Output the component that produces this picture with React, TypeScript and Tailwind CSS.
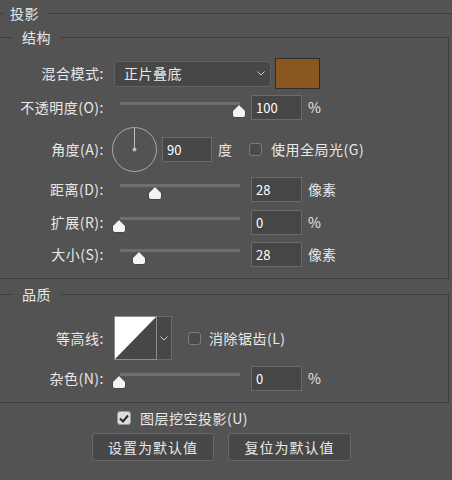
import React from 'react';

const FONT = { fontFamily: '"Noto Sans CJK SC", "Noto Sans", sans-serif' };

function Thumb({ left }: { left: number }) {
  return (
    <svg className="absolute top-[9px]" style={{ left }} width="14" height="14" viewBox="0 0 14 14">
      <path d="M7 0.5 L13.5 7 V11 Q13.5 13.5 11 13.5 H3 Q0.5 13.5 0.5 11 V7 Z" fill="#f4f4f4" stroke="#2e2e2e" strokeWidth="0.8" />
    </svg>
  );
}

function Slider({ pos }: { pos: number }) {
  // pos = thumb centre, px from track start
  return (
    <div className="relative w-[139px] h-[25px] shrink-0">
      <div className="absolute left-[8px] top-[7px] w-[120px] h-[3px] bg-[#6e6e6e]" />
      <Thumb left={pos + 1} />
    </div>
  );
}

function NumBox({ value, w = 'w-[51px]' }: { value: string; w?: string }) {
  return (
    <div className={`${w} h-[25px] shrink-0 bg-[#464646] border border-[#6a6a6a] flex items-center pl-[4px] text-[13px] text-white`}>
      {value}
    </div>
  );
}

function Label({ children }: { children: React.ReactNode }) {
  return <div className="w-[105px] shrink-0 text-right pr-px tracking-[0.5px]">{children}</div>;
}

function GroupHeader({ title }: { title: string }) {
  return (
    <div className="flex items-center h-[20px]">
      <div className="w-[12px] h-px bg-[#3e3e3e]" />
      <span className="px-[10px] leading-none tracking-[0.5px]">{title}</span>
      <div className="flex-1 self-end h-[10px] border-t border-r border-[#3e3e3e]" />
    </div>
  );
}

function SliderRow({ label, pos, value, unit, className = '' }: { label: React.ReactNode; pos: number; value: string; unit: string; className?: string }) {
  return (
    <div className={`flex items-center h-[25px] ${className}`}>
      <Label>{label}</Label>
      <div className="ml-[7px]">
        <Slider pos={pos} />
      </div>
      <NumBox value={value} />
      <span className="ml-[6px]">{unit}</span>
    </div>
  );
}

function CheckBox({ checked = false }: { checked?: boolean }) {
  if (checked) {
    return (
      <div className="w-[14px] h-[14px] shrink-0 rounded-[3px] bg-[#dcdcdc] border border-[#9a9a9a] flex items-center justify-center">
        <svg width="10" height="9" viewBox="0 0 10 9">
          <path d="M1 4.5 L4 7.5 L9 1.5" fill="none" stroke="#2a2a2a" strokeWidth="2" />
        </svg>
      </div>
    );
  }
  return <div className="w-[13px] h-[13px] shrink-0 rounded-[3px] bg-[#4a4a4a] border border-[#7c7c7c]" />;
}

function Chevron() {
  return (
    <svg width="8" height="5" viewBox="0 0 8 5">
      <path d="M0.5 0.5 L4 4 L7.5 0.5" fill="none" stroke="#cfcfcf" strokeWidth="1" />
    </svg>
  );
}

export default function App() {
  return (
    <div className="w-[452px] h-[480px] bg-[#535353] overflow-hidden text-[14px] text-[#e8e8e8]" style={FONT}>
      {/* 投影 */}
      <div className="flex items-center h-[26px]">
        <div className="w-[3px] h-px bg-[#3e3e3e]" />
        <span className="ml-[7px] mr-[8px] leading-none tracking-[0.5px]">投影</span>
        <div className="flex-1 h-px bg-[#3e3e3e]" />
      </div>

      {/* 结构 */}
      <div className="mt-px w-[449px]">
        <GroupHeader title="结构" />
        <div className="border-r border-b border-[#3e3e3e] pt-[11px] pb-[11px]">
          <div className="flex items-center h-[31px]">
            <Label>混合模式:</Label>
            <div className="ml-[9px] w-[157px] h-[26px] rounded-[3px] bg-[#474747] border border-[#626262] flex items-center pl-[9px] pr-[5px]">
              <span className="flex-1 tracking-[0.5px]">正片叠底</span>
              <Chevron />
            </div>
            <div className="ml-[4px] w-[45px] h-[31px] bg-[#8b5720] border border-[#2c2c2c]" />
          </div>

          <SliderRow className="mt-[6px]" label="不透明度(O):" pos={119} value="100" unit="%" />

          <div className="flex items-center h-[45px] mt-[7px]">
            <Label>角度(A):</Label>
            <div className="ml-[7px] w-[45px] h-[45px] shrink-0">
              <svg width="45" height="45" viewBox="0 0 45 45">
                <circle cx="22.5" cy="22.5" r="22" fill="none" stroke="#a8a8a8" strokeWidth="1" />
                <line x1="22.5" y1="1" x2="22.5" y2="22.5" stroke="#bdbdbd" strokeWidth="1" />
                <circle cx="22.5" cy="22.5" r="2" fill="#bdbdbd" />
              </svg>
            </div>
            <div className="ml-[5px]">
              <NumBox value="90" w="w-[50px]" />
            </div>
            <span className="ml-[6px]">度</span>
            <div className="ml-[17px]">
              <CheckBox />
            </div>
            <span className="ml-[9px] tracking-[0.5px]">使用全局光(G)</span>
          </div>

          <SliderRow className="mt-[5px]" label="距离(D):" pos={35} value="28" unit="像素" />
          <SliderRow className="mt-[8px]" label="扩展(R):" pos={-1} value="0" unit="%" />
          <SliderRow className="mt-[7px]" label="大小(S):" pos={19} value="28" unit="像素" />
        </div>
      </div>

      {/* 品质 */}
      <div className="mt-[5px] w-[449px]">
        <GroupHeader title="品质" />
        <div className="border-r border-b border-[#3e3e3e] pt-[12px] pb-[11px]">
          <div className="flex items-center h-[44px]">
            <Label>等高线:</Label>
            <div className="ml-[9px] flex h-[44px]">
              <svg width="43" height="44" viewBox="0 0 43 44">
                <rect x="0.5" y="0.5" width="42" height="43" fill="#474747" stroke="#8c8c8c" />
                <path d="M1 1 H42 L1 43 Z" fill="#ffffff" />
              </svg>
              <div className="w-[15px] h-[44px] bg-[#474747] border border-[#6a6a6a] border-l-0 flex items-center justify-center">
                <Chevron />
              </div>
            </div>
            <div className="ml-[16px]">
              <CheckBox />
            </div>
            <span className="ml-[8px] tracking-[0.5px]">消除锯齿(L)</span>
          </div>
          <SliderRow className="mt-[6px]" label="杂色(N):" pos={-1} value="0" unit="%" />
        </div>
      </div>

      {/* bottom */}
      <div className="flex items-center h-[20px] mt-[5px] pl-[117px]">
        <CheckBox checked />
        <span className="ml-[9px] tracking-[0.5px]">图层挖空投影(U)</span>
      </div>
      <div className="flex mt-[5px] pl-[92px] gap-[14px]">
        <button className="w-[122px] h-[28px] rounded-[3px] bg-[#474747] border border-[#686868] tracking-[1px]">设置为默认值</button>
        <button className="w-[123px] h-[28px] rounded-[3px] bg-[#474747] border border-[#686868] tracking-[1px]">复位为默认值</button>
      </div>
    </div>
  );
}
